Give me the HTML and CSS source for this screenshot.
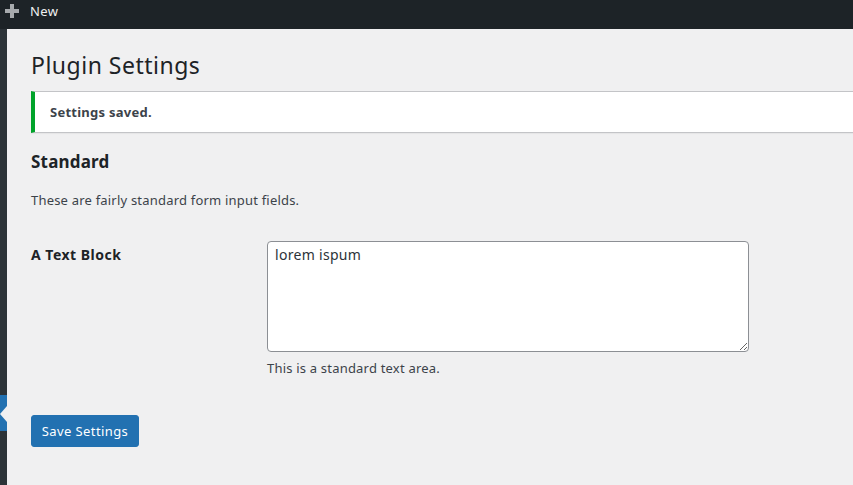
FILE: index.html
```html
<!DOCTYPE html>
<html>
<head>
<meta charset="utf-8">
<link rel="stylesheet" href="styles.css">
</head>
<body>
<div class="adminbar">
  <div class="newitem">
    <svg class="plus" width="14" height="14" viewBox="0 0 14 14"><rect x="5" y="0" width="4" height="14" fill="#a7aaad"/><rect x="0" y="5" width="14" height="4" fill="#a7aaad"/></svg>
    <span class="newlabel">New</span>
  </div>
</div>
<div class="layout">
  <div class="sidebar">
    <div class="side-top"></div>
    <div class="side-current"><span class="notch"></span></div>
    <div class="side-bottom"></div>
  </div>
  <div class="content">
    <h1 class="title">Plugin Settings</h1>
    <div class="notice"><p>Settings saved.</p></div>
    <h2 class="section">Standard</h2>
    <p class="intro">These are fairly standard form input fields.</p>
    <div class="formrow">
      <div class="label">A Text Block</div>
      <div class="field">
        <textarea class="textarea">lorem ispum</textarea>
        <p class="desc">This is a standard text area.</p>
      </div>
    </div>
    <button class="button">Save Settings</button>
  </div>
</div>
</body>
</html>
```
FILE: styles.css
```css
* { box-sizing: border-box; }
html, body { margin: 0; height: 100%; }
body {
  font-family: "Noto Sans", "Open Sans", sans-serif;
  font-size: 13px;
  letter-spacing: 0.2px;
  color: #3c434a;
  background: #f0f0f1;
  display: flex;
  flex-direction: column;
  overflow: hidden;
}
.adminbar {
  height: 29px;
  background: #1d2327;
  flex: none;
}
.newitem {
  display: flex;
  align-items: center;
  height: 22px;
  padding-left: 5px;
  gap: 11px;
}
.plus { display: block; }
.newlabel {
  color: #f0f0f1;
  font-size: 13px;
  line-height: 22px;
  letter-spacing: 0.4px;
}
.layout {
  flex: 1;
  display: flex;
}
.sidebar {
  width: 7px;
  display: flex;
  flex-direction: column;
  flex: none;
}
.side-top { height: 366px; background: #2c3338; }
.side-current {
  height: 36px;
  background: #2271b1;
  position: relative;
}
.notch {
  position: absolute;
  right: 0;
  top: 11px;
  width: 0;
  height: 0;
  border-top: 8px solid transparent;
  border-bottom: 8px solid transparent;
  border-right: 7px solid #f0f0f1;
}
.side-bottom { flex: 1; background: #2c3338; }
.content {
  flex: 1;
  padding-left: 24px;
  background: #f0f0f1;
}
.title {
  font-size: 23px;
  font-weight: 400;
  line-height: 30px;
  letter-spacing: 0.5px;
  margin: 0;
  padding: 21px 0 0;
  color: #1d2327;
}
.notice {
  margin-top: 11px;
  height: 42px;
  background: #fff;
  border: 1px solid #c3c4c7;
  border-left: 4px solid #00a32a;
  border-right: none;
  box-shadow: 0 1px 1px rgba(0,0,0,.04);
  display: flex;
  align-items: center;
  padding-left: 15px;
}
.notice p {
  margin: 0;
  font-weight: 700;
  font-size: 13px;
  letter-spacing: 0.25px;
  color: #3c434a;
}
.section {
  font-size: 17px;
  font-weight: 700;
  color: #1d2327;
  margin: 17px 0 0;
  line-height: 24px;
  letter-spacing: 0.2px;
}
.intro {
  margin: 16px 0 0;
  line-height: 20px;
}
.formrow {
  display: flex;
  margin-top: 31px;
}
.label {
  width: 236px;
  font-size: 14px;
  font-weight: 700;
  color: #1d2327;
  padding-top: 4px;
  line-height: 20px;
  letter-spacing: 0.5px;
}
.field { display: flex; flex-direction: column; }
.textarea {
  width: 482px;
  height: 111px;
  border: 1px solid #8c8f94;
  border-radius: 4px;
  font-family: inherit;
  font-size: 14px;
  letter-spacing: 0.3px;
  color: #2c3338;
  padding: 3px 7px;
  line-height: 20px;
  margin: 0;
  display: block;
  resize: both;
}
.desc {
  margin: 6px 0 0;
  line-height: 20px;
}
.button {
  margin-top: 37px;
  width: 108px;
  height: 32px;
  background: #2271b1;
  color: #fff;
  border: 1px solid #2271b1;
  border-radius: 3px;
  font-family: inherit;
  font-size: 13px;
  letter-spacing: 0.4px;
  padding: 0;
  display: block;
}
```
